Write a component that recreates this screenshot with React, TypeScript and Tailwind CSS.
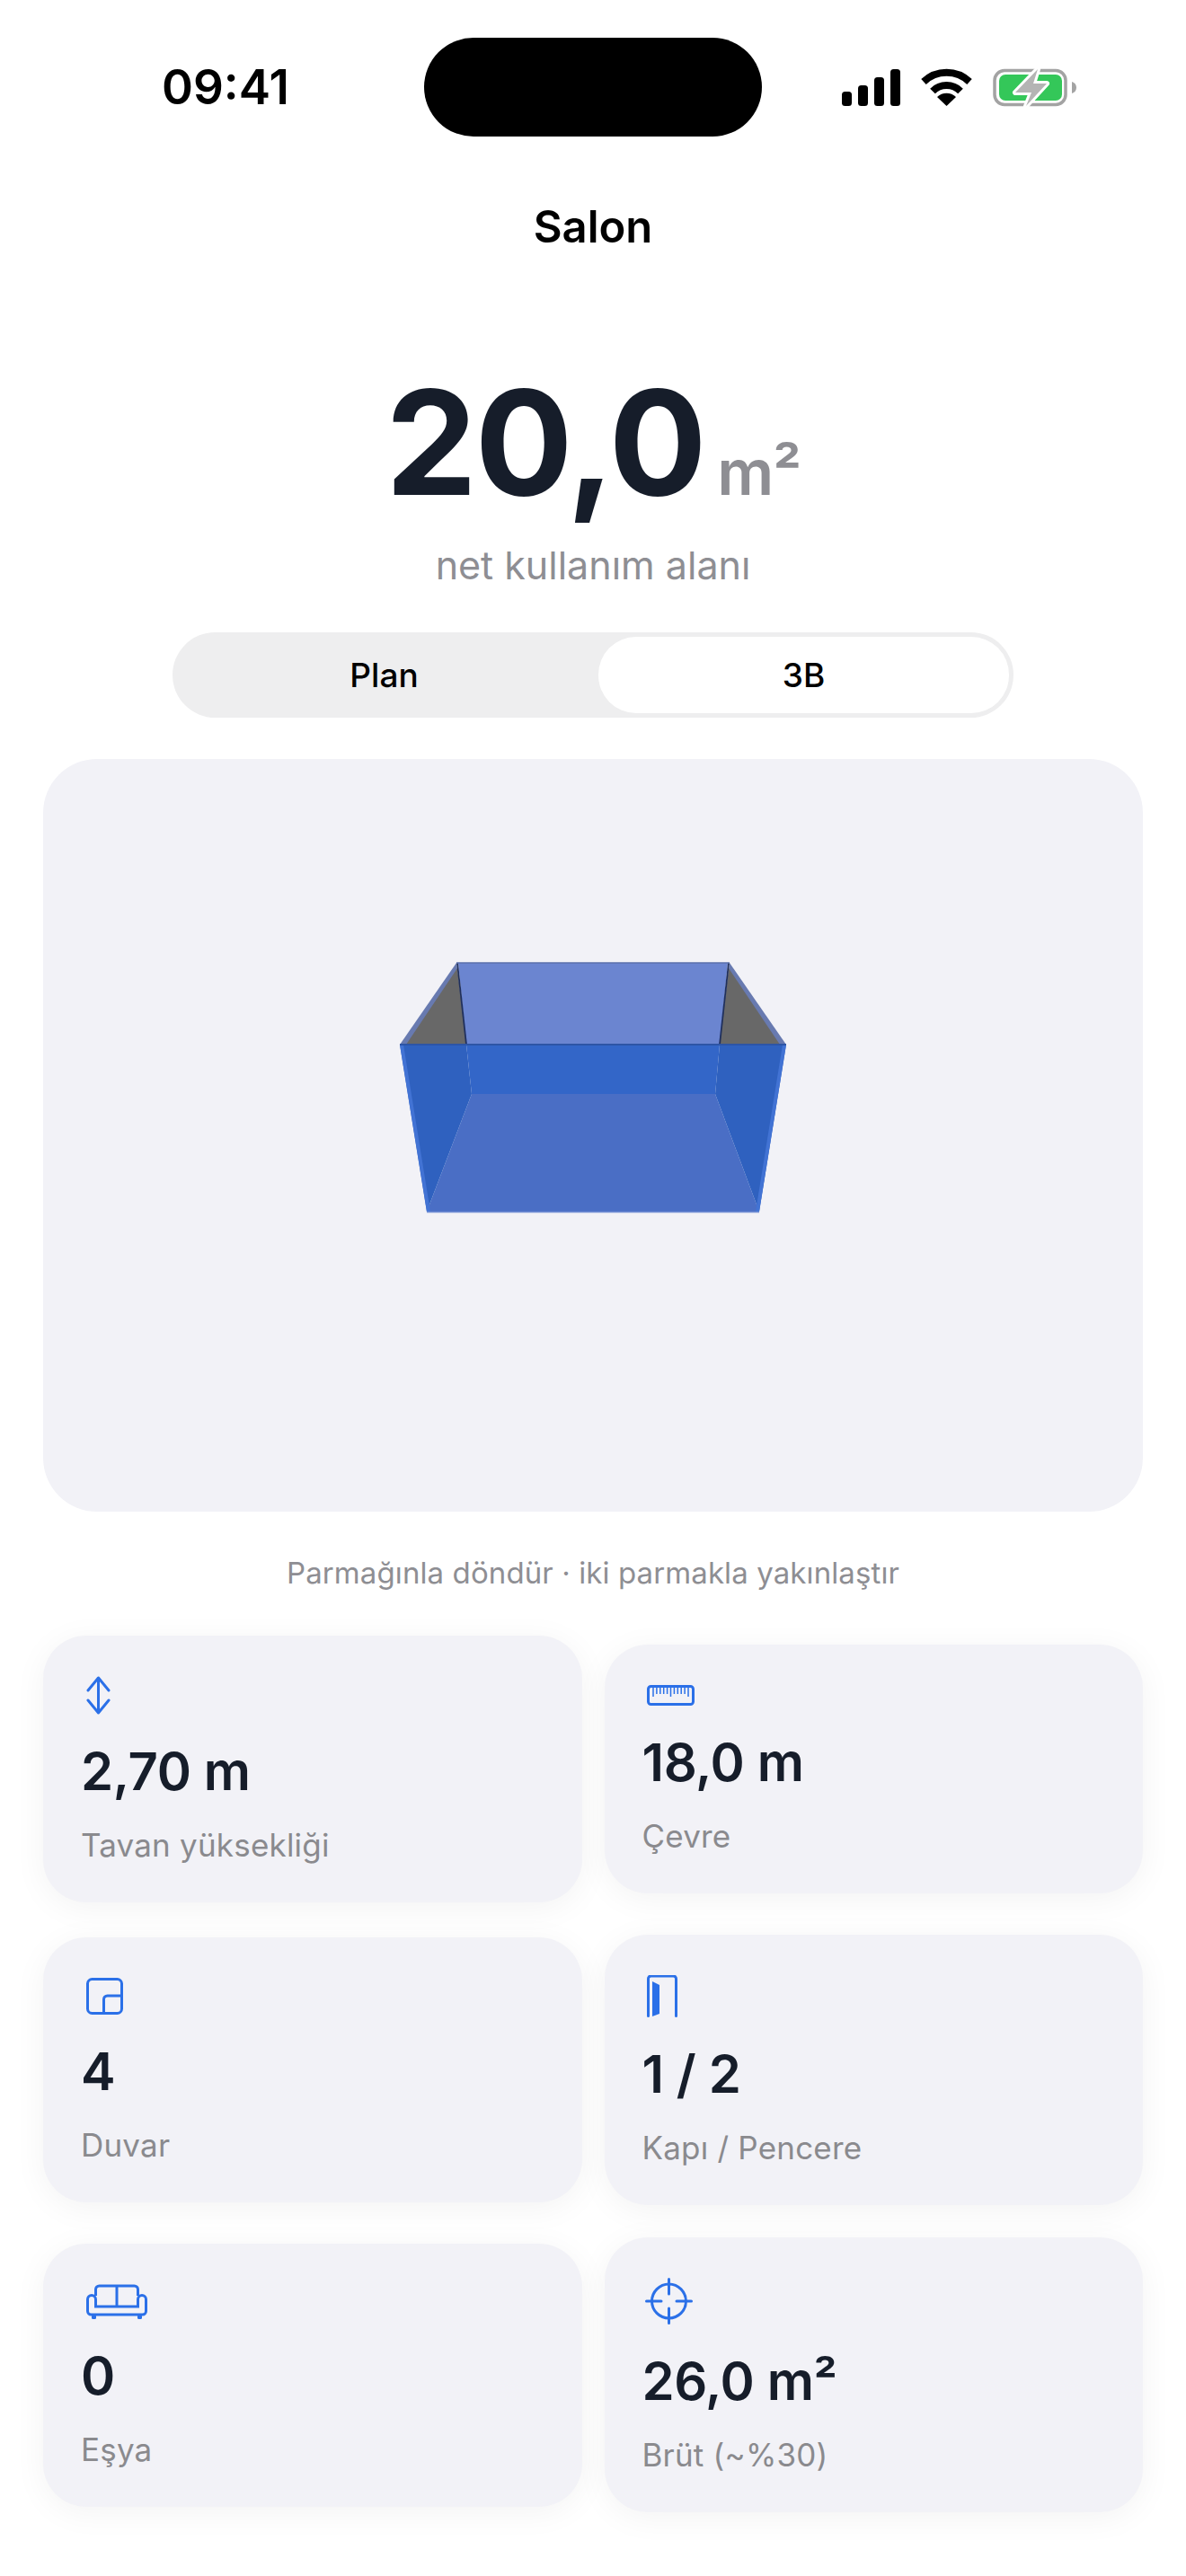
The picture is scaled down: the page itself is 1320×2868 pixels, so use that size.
const font = { fontFamily: "Inter, 'Noto Sans', sans-serif" };

function StatusIcons() {
  return (
    <div className="flex items-center pl-[89px]">
      <svg width="65" height="41" viewBox="0 0 65 41" className="fill-black">
        <rect x="0" y="25" width="11" height="16" rx="3.5" />
        <rect x="18" y="18" width="11" height="23" rx="3.5" />
        <rect x="36" y="9" width="11" height="32" rx="3.5" />
        <rect x="54" y="0" width="11" height="41" rx="3.5" />
      </svg>
      <svg width="57" height="42" viewBox="0 0 57 42" className="ml-[23px]">
        <path d="M3 15 A37 37 0 0 1 54 15" fill="none" stroke="#000" strokeWidth="8" />
        <path d="M13 25.500 A22 22 0 0 1 44 25.500" fill="none" stroke="#000" strokeWidth="8" />
        <path d="M28.500 42 L18 32 A15 15 0 0 1 39 32 Z" fill="#000" />
      </svg>
      <svg width="93" height="43" viewBox="0 0 93 43" className="ml-[23px]">
        <rect x="2" y="2.500" width="79" height="38" rx="11" fill="none" stroke="#a3a3a3" strokeWidth="3.500" />
        <rect x="7" y="7" width="70" height="29" rx="7" fill="#34c759" />
        <path d="M88 15 C91 16 93 18 93 21.500 C93 25 91 27 88 28 Z" fill="#a3a3a3" />
        <path
          d="M50 1 L25 27 L43 27 L37 42 L60 17 L45 17 Z"
          fill="#b4b4b4"
          stroke="#fff"
          strokeWidth="6"
          paintOrder="stroke"
          strokeLinejoin="round"
        />
      </svg>
    </div>
  );
}

function Room() {
  return (
    <svg viewBox="48 845 1224 838" className="w-full h-full">
      <polygon points="510,1072 810,1072 801,1163 519,1163" fill="#6b85d0" />
      <polygon points="519,1163 801,1163 796,1218 525,1218" fill="#3366c8" />
      <polygon points="525,1218 796,1218 845,1349 475,1349" fill="#4a6ec5" />
      <polygon points="508,1072 519,1163 445,1163" fill="#687ab0" />
      <polygon points="509,1078 519,1163 452,1163" fill="#686868" />
      <polygon points="812,1072 801,1163 875,1163" fill="#687ab0" />
      <polygon points="811,1078 801,1163 868,1163" fill="#686868" />
      <polygon points="445,1163 519,1163 525,1218 475,1349" fill="#2f61bf" />
      <polygon points="875,1163 801,1163 796,1218 845,1349" fill="#2f61bf" />
      <polygon points="445,1163 449,1163 479,1349 475,1349" fill="#4273d4" />
      <polygon points="875,1163 871,1163 841,1349 845,1349" fill="#4273d4" />
      <line x1="509" y1="1072" x2="519" y2="1163" stroke="#1f2f5c" strokeWidth="1.800" />
      <line x1="811" y1="1072" x2="801" y2="1163" stroke="#1f2f5c" strokeWidth="1.800" />
      <line x1="508" y1="1072" x2="812" y2="1072" stroke="#5a70ab" strokeWidth="1.500" />
      <line x1="445" y1="1163" x2="875" y2="1163" stroke="#2d55a6" strokeWidth="2" />
      <line x1="475" y1="1349.500" x2="845" y2="1349.500" stroke="#7a94d6" strokeWidth="1.500" />
    </svg>
  );
}

const iconColor = "#2b70e8";

function HeightIcon() {
  return (
    <svg width="27" height="43" viewBox="0 0 27 43" fill="none" stroke={iconColor} strokeWidth="3" strokeLinecap="round" strokeLinejoin="round" className="ml-[6px]">
      <path d="M13.500 3 V40 M2 16 L13.500 2 L25 16 M2 27 L13.500 41 L25 27" />
    </svg>
  );
}

function RulerIcon() {
  return (
    <svg width="53" height="23" viewBox="0 0 53 23" fill="none" stroke={iconColor} className="ml-[5px]">
      <rect x="1.500" y="1.500" width="50" height="20" rx="3" strokeWidth="3" />
      <path
        d="M7 3 V13 M10.900 3 V10 M14.800 3 V10 M18.700 3 V10 M22.600 3 V10 M26.500 3 V13 M30.400 3 V10 M34.300 3 V10 M38.200 3 V10 M42.100 3 V10 M46 3 V13"
        strokeWidth="1.500"
      />
    </svg>
  );
}

function WallIcon() {
  return (
    <svg width="41" height="41" viewBox="0 0 41 41" fill="none" stroke={iconColor} strokeWidth="3" className="ml-[6px]">
      <rect x="1.500" y="1.500" width="38" height="38" rx="5" />
      <path d="M19.500 39 V24 a4 4 0 0 1 4 -4 H39" />
    </svg>
  );
}

function DoorIcon() {
  return (
    <svg width="34" height="47" viewBox="0 0 34 47" fill="none" className="ml-[5px]">
      <path d="M1.500 45.500 V4 a3 3 0 0 1 3 -3 H29.500 a3 3 0 0 1 3 3 V45.500" stroke={iconColor} strokeWidth="3" strokeLinecap="round" />
      <polygon points="6,7 14,11 14,43 6,46" fill={iconColor} />
    </svg>
  );
}

function SofaIcon() {
  return (
    <svg width="68" height="39" viewBox="0 0 68 39" fill="none" stroke={iconColor} strokeWidth="3" className="ml-[6px]">
      <path d="M10.500 13 V6 a4 4 0 0 1 4 -4 H53.500 a4 4 0 0 1 4 4 V13 M34 2 V25" />
      <path d="M10.500 25 V17 a4.500 4.500 0 0 0 -9 0 V30 a4 4 0 0 0 4 4 H62.500 a4 4 0 0 0 4 -4 V17 a4.500 4.500 0 0 0 -9 0 V25 Z" />
      <rect x="6" y="34" width="5" height="5" rx="1.500" fill={iconColor} stroke="none" />
      <rect x="57" y="34" width="5" height="5" rx="1.500" fill={iconColor} stroke="none" />
    </svg>
  );
}

function TargetIcon() {
  return (
    <svg width="53" height="52" viewBox="0 0 53 52" fill="none" stroke={iconColor} strokeWidth="3" strokeLinecap="round" className="ml-[3px]">
      <circle cx="26.500" cy="26" r="19" />
      <path d="M26.500 1.500 V18 M26.500 34 V50.500 M1.500 26 H18 M35 26 H51.500" />
    </svg>
  );
}

function StatCard({ icon, value, label }: { icon: React.ReactNode; value: string; label: string }) {
  return (
    <div className="bg-[#f2f2f7] rounded-[48px] pt-[45px] pb-[39px] pl-[42px] shadow-[0_6px_36px_rgba(0,0,0,0.05)]">
      <div className="flex">{icon}</div>
      <div className="mt-[27px] text-[58px] leading-[72px] font-semibold text-[#161d2a] tracking-[-0.4px]">{value}</div>
      <div className="mt-[21px] text-[35px] leading-[50px] text-[#8a8a8e] tracking-[0.2px]">{label}</div>
    </div>
  );
}

export default function App() {
  return (
    <div style={font} className="w-[1320px] h-[2868px] bg-white flex flex-col overflow-hidden">
      <div className="flex items-center h-[110px] mt-[42px]">
        <div className="w-[472px] pl-[180px] text-[53px] leading-[60px] font-semibold text-black">09:41</div>
        <div className="w-[376px] h-[110px] rounded-[55px] bg-black" />
        <StatusIcons />
      </div>

      <div className="mt-[70px] text-center text-[49px] leading-[62px] font-semibold text-black">Salon</div>

      <div className="mt-[113px] flex items-baseline justify-center">
        <span className="text-[162px] leading-[190px] font-bold text-[#161d2a] tracking-[-2.5px]">20,0</span>
        <span className="ml-[14px] text-[70px] leading-[90px] font-semibold text-[#8e8e93] tracking-[-1px]">m²</span>
      </div>
      <div className="mt-[14px] text-center text-[43px] leading-[56px] text-[#8e8e93]">net kullanım alanı</div>

      <div className="mt-[47px] mx-auto w-[936px] h-[95px] p-[5px] flex rounded-[48px] bg-[#eeeeef] text-[37px] font-medium text-black">
        <div className="flex-1 flex items-center justify-center pr-[8px]">Plan</div>
        <div className="w-[457px] flex items-center justify-center bg-white rounded-[42px]">3B</div>
      </div>

      <div className="mt-[46px] mx-[48px] h-[838px] bg-[#f2f2f7] rounded-[60px]">
        <Room />
      </div>

      <div className="mt-[46px] text-center text-[33px] leading-[44px] text-[#8e8e93] tracking-[0.1px]">
        Parmağınla döndür · iki parmakla yakınlaştır
      </div>

      <div className="mt-[48px] mx-[48px] grid grid-cols-2 gap-x-[25px] gap-y-[36px] items-center">
        <StatCard icon={<HeightIcon />} value="2,70 m" label="Tavan yüksekliği" />
        <StatCard icon={<RulerIcon />} value="18,0 m" label="Çevre" />
        <StatCard icon={<WallIcon />} value="4" label="Duvar" />
        <StatCard icon={<DoorIcon />} value="1 / 2" label="Kapı / Pencere" />
        <StatCard icon={<SofaIcon />} value="0" label="Eşya" />
        <StatCard icon={<TargetIcon />} value="26,0 m²" label="Brüt (~%30)" />
      </div>
    </div>
  );
}
